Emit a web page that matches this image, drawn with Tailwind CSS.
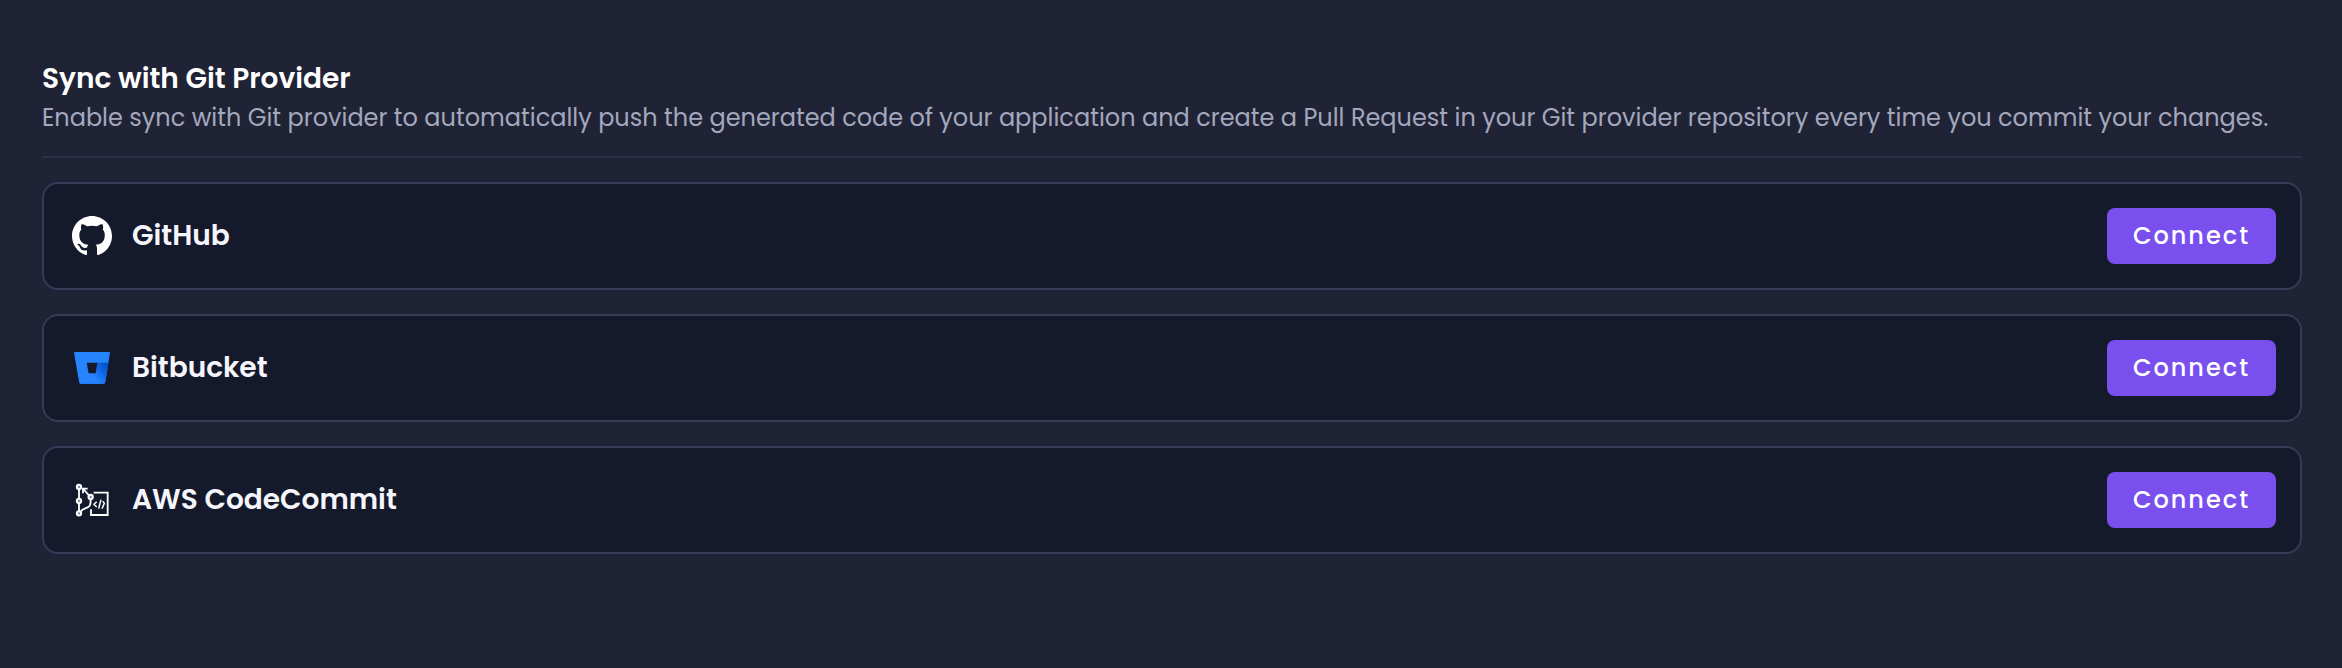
<!DOCTYPE html>
<html lang="en">
<head>
<meta charset="utf-8">
<title>Sync with Git Provider</title>
<script src="https://cdn.jsdelivr.net/npm/@tailwindcss/browser@4"></script>
</head>
<body class="bg-[#202335] h-[668px] overflow-hidden font-['Poppins','Inter',sans-serif] text-white">
<main class="pl-[42px] pr-10 pt-[59px]">
  <header class="h-[99px] border-b-2 border-[#2b2f48] whitespace-nowrap">
    <h1 class="text-[28px] leading-10 font-semibold">Sync with Git Provider</h1>
    <p class="text-[24px] leading-[38px] text-[#a3a8bd]">Enable sync with Git provider to automatically push the generated code of your application and create a Pull Request in your Git provider repository every time you commit your changes.</p>
  </header>
  <ul class="mt-6 flex flex-col gap-6">
    <li class="h-[108px] flex items-center rounded-2xl border-2 border-[#373b57] bg-[#15192c] pl-7 pr-6">
      <svg class="size-10 mr-5" viewBox="0 0 16 16" fill="#fff"><path d="M8 0C3.58 0 0 3.58 0 8c0 3.54 2.29 6.53 5.47 7.59.4.07.55-.17.55-.38 0-.19-.01-.82-.01-1.49-2.01.37-2.53-.49-2.69-.94-.09-.23-.48-.94-.82-1.13-.28-.15-.68-.52-.01-.53.63-.01 1.08.58 1.23.82.72 1.21 1.87.87 2.33.66.07-.52.28-.87.51-1.07-1.78-.2-3.64-.89-3.64-3.95 0-.87.31-1.59.82-2.15-.08-.2-.36-1.02.08-2.12 0 0 .67-.21 2.2.82.64-.18 1.32-.27 2-.27s1.36.09 2 .27c1.53-1.04 2.2-.82 2.2-.82.44 1.1.16 1.92.08 2.12.51.56.82 1.27.82 2.15 0 3.07-1.87 3.75-3.65 3.95.29.25.54.73.54 1.48 0 1.07-.01 1.93-.01 2.2 0 .21.15.46.55.38A8.01 8.01 0 0 0 16 8c0-4.42-3.58-8-8-8Z"/></svg>
      <h2 class="flex-1 text-[28px] leading-10 font-semibold text-[#f5f6fb]">GitHub</h2>
      <button class="h-14 w-[169px] rounded-lg bg-[#7950ed] text-2xl tracking-[2px] font-medium">Connect</button>
    </li>
    <li class="h-[108px] flex items-center rounded-2xl border-2 border-[#373b57] bg-[#15192c] pl-7 pr-6">
      <svg class="size-10 mr-5" viewBox="0 0 40 40"><defs><linearGradient id="bb" x1="36" y1="14" x2="20" y2="27" gradientUnits="userSpaceOnUse"><stop offset=".15" stop-color="#0052cc"/><stop offset="1" stop-color="#2684ff"/></linearGradient></defs><path fill="#2684ff" d="M3.2 4h33.6a1.100 1.100 0 0 1 1.100 1.300L33.200 34.600a1.500 1.500 0 0 1-1.400 1.200H8.700a1.500 1.500 0 0 1-1.500-1.300L2.100 5.300A1.100 1.100 0 0 1 3.200 4Z"/><path fill="url(#bb)" d="M36.500 14.700H25.200l-1.900 10.500H16.800L8 35.500q.4.300.900.300h22.900a1.500 1.500 0 0 0 1.400-1.200Z"/><path fill="#15192c" d="M14.700 14.700h10.700l-1.800 10.500h-7Z"/></svg>
      <h2 class="flex-1 text-[28px] leading-10 font-semibold text-[#f5f6fb]">Bitbucket</h2>
      <button class="h-14 w-[169px] rounded-lg bg-[#7950ed] text-2xl tracking-[2px] font-medium">Connect</button>
    </li>
    <li class="h-[108px] flex items-center rounded-2xl border-2 border-[#373b57] bg-[#15192c] pl-7 pr-6">
      <svg class="size-10 mr-5" viewBox="18 18 120 120" fill="none" stroke="#fff" stroke-width="5.500"><path d="M39 45v30M39 86v26M44 113c4-9 12-8 21-13 8-4 9-9 9-24M69 64 52 45M51 58V44h14M83 56h42v67H75v-17"/><path d="m92 83-8 8 8 8M105 77l-7 27M110 82l5 6-7 16" stroke-width="4.500"/><g fill="#858794" stroke-width="6"><circle cx="39" cy="39" r="6.500"/><circle cx="39" cy="81" r="6.500"/><circle cx="39" cy="118" r="6.500"/><circle cx="74" cy="69" r="6.500"/></g></svg>
      <h2 class="flex-1 text-[28px] leading-10 font-semibold text-[#f5f6fb]">AWS CodeCommit</h2>
      <button class="h-14 w-[169px] rounded-lg bg-[#7950ed] text-2xl tracking-[2px] font-medium">Connect</button>
    </li>
  </ul>
</main>
</body>
</html>
